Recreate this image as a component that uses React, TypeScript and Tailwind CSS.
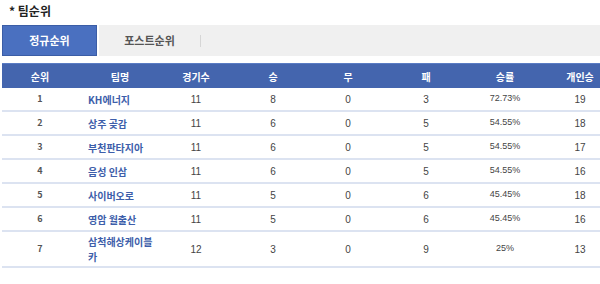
import React from "react";

const rows = [
  { r: "1", name: "KH에너지", g: "11", w: "8", d: "0", l: "3", p: "72.73%", s: "19" },
  { r: "2", name: "상주 곶감", g: "11", w: "6", d: "0", l: "5", p: "54.55%", s: "18" },
  { r: "3", name: "부천판타지아", g: "11", w: "6", d: "0", l: "5", p: "54.55%", s: "17" },
  { r: "4", name: "음성 인삼", g: "11", w: "6", d: "0", l: "5", p: "54.55%", s: "16" },
  { r: "5", name: "사이버오로", g: "11", w: "5", d: "0", l: "6", p: "45.45%", s: "18" },
  { r: "6", name: "영암 월출산", g: "11", w: "5", d: "0", l: "6", p: "45.45%", s: "16" },
  { r: "7", name: "삼척해상케이블카", g: "12", w: "3", d: "0", l: "9", p: "25%", s: "13" },
];

const grid = "grid grid-cols-[76px_84px_68px_86px_64px_92px_66px_84px]";

export default function App() {
  return (
    <div className="w-[600px] h-[284px] bg-white overflow-hidden text-[#333] font-['Noto_Sans_CJK_KR','Noto_Sans',sans-serif]">
      <div className="h-[25px] pl-[9px] pt-[3px] text-[12px] font-bold leading-[16px] text-[#222]">* 팀순위</div>
      <div className="flex h-[31px] ml-[2px]">
        <div className="w-[95px] bg-[#4a70c0] border border-[#3b5da6] text-white text-[11px] font-bold flex items-center justify-center">
          정규순위
        </div>
        <div className="flex-1 ml-[2px] bg-[#f0f0f0] flex items-center">
          <div className="w-[101px] text-center text-[11px] font-bold text-[#555]">포스트순위</div>
          <div className="w-px h-[12px] bg-[#d6d6d6]" />
        </div>
      </div>
      <div className="ml-[2px] mt-[7px] w-[620px]">
        <div className={`${grid} h-[25px] bg-[#4465ae] border-t border-[#5a7cc4] text-white text-[10px] font-bold items-center text-center`}>
          <div>순위</div>
          <div>팀명</div>
          <div>경기수</div>
          <div>승</div>
          <div>무</div>
          <div>패</div>
          <div>승률</div>
          <div>개인승</div>
        </div>
        {rows.map((row, i) => (
          <div
            key={row.r}
            className={`${grid} ${i === 6 ? "h-[36px]" : "h-[24px]"} border-b-2 border-[#dce3f1] items-center text-center`}
          >
            <div className="text-[9px] font-bold text-[#555]">{row.r}</div>
            <div className="text-left pl-[10px]">
              <div className="w-[66px] text-[10px] font-bold text-[#3d5eaa] leading-[15px]">{row.name}</div>
            </div>
            <div className="text-[10px] text-[#444] font-['Liberation_Sans',sans-serif]">{row.g}</div>
            <div className="text-[10px] text-[#444] font-['Liberation_Sans',sans-serif]">{row.w}</div>
            <div className="text-[10px] text-[#444] font-['Liberation_Sans',sans-serif]">{row.d}</div>
            <div className="text-[10px] text-[#444] font-['Liberation_Sans',sans-serif]">{row.l}</div>
            <div className="text-[9px] text-[#444] font-['Liberation_Sans',sans-serif]">{row.p}</div>
            <div className="text-[10px] text-[#444] font-['Liberation_Sans',sans-serif]">{row.s}</div>
          </div>
        ))}
      </div>
    </div>
  );
}
